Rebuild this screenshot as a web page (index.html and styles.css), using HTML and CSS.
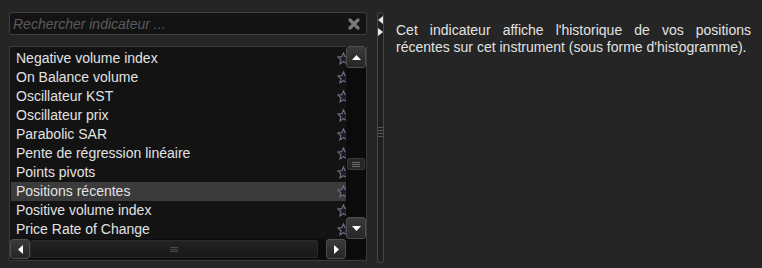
FILE: index.html
```html
<!DOCTYPE html>
<html lang="fr">
<head>
<meta charset="utf-8">
<link rel="stylesheet" href="styles.css">
</head>
<body>
<div class="page">
  <div class="left">
    <div class="search">
      <span class="placeholder">Rechercher indicateur ...</span>
      <svg class="clear" width="12" height="12" viewBox="0 0 12 12"><path d="M2 2 L10 10 M10 2 L2 10" stroke="#7a7a7a" stroke-width="3.2" stroke-linecap="round"/></svg>
    </div>
    <div class="listbox">
      <div class="items">
        <div class="row"><span>Negative volume index</span><svg class="star" viewBox="0 0 12 12"><path d="M6 0.8 L7.5 4.3 L11.3 4.6 L8.4 7.1 L9.3 10.9 L6 8.9 L2.7 10.9 L3.6 7.1 L0.7 4.6 L4.5 4.3 Z"/></svg></div>
        <div class="row"><span>On Balance volume</span><svg class="star" viewBox="0 0 12 12"><path d="M6 0.8 L7.5 4.3 L11.3 4.6 L8.4 7.1 L9.3 10.9 L6 8.9 L2.7 10.9 L3.6 7.1 L0.7 4.6 L4.5 4.3 Z"/></svg></div>
        <div class="row"><span>Oscillateur KST</span><svg class="star" viewBox="0 0 12 12"><path d="M6 0.8 L7.5 4.3 L11.3 4.6 L8.4 7.1 L9.3 10.9 L6 8.9 L2.7 10.9 L3.6 7.1 L0.7 4.6 L4.5 4.3 Z"/></svg></div>
        <div class="row"><span>Oscillateur prix</span><svg class="star" viewBox="0 0 12 12"><path d="M6 0.8 L7.5 4.3 L11.3 4.6 L8.4 7.1 L9.3 10.9 L6 8.9 L2.7 10.9 L3.6 7.1 L0.7 4.6 L4.5 4.3 Z"/></svg></div>
        <div class="row"><span>Parabolic SAR</span><svg class="star" viewBox="0 0 12 12"><path d="M6 0.8 L7.5 4.3 L11.3 4.6 L8.4 7.1 L9.3 10.9 L6 8.9 L2.7 10.9 L3.6 7.1 L0.7 4.6 L4.5 4.3 Z"/></svg></div>
        <div class="row"><span>Pente de régression linéaire</span><svg class="star" viewBox="0 0 12 12"><path d="M6 0.8 L7.5 4.3 L11.3 4.6 L8.4 7.1 L9.3 10.9 L6 8.9 L2.7 10.9 L3.6 7.1 L0.7 4.6 L4.5 4.3 Z"/></svg></div>
        <div class="row"><span>Points pivots</span><svg class="star" viewBox="0 0 12 12"><path d="M6 0.8 L7.5 4.3 L11.3 4.6 L8.4 7.1 L9.3 10.9 L6 8.9 L2.7 10.9 L3.6 7.1 L0.7 4.6 L4.5 4.3 Z"/></svg></div>
        <div class="row selected"><span>Positions récentes</span><svg class="star" viewBox="0 0 12 12"><path d="M6 0.8 L7.5 4.3 L11.3 4.6 L8.4 7.1 L9.3 10.9 L6 8.9 L2.7 10.9 L3.6 7.1 L0.7 4.6 L4.5 4.3 Z"/></svg></div>
        <div class="row"><span>Positive volume index</span><svg class="star" viewBox="0 0 12 12"><path d="M6 0.8 L7.5 4.3 L11.3 4.6 L8.4 7.1 L9.3 10.9 L6 8.9 L2.7 10.9 L3.6 7.1 L0.7 4.6 L4.5 4.3 Z"/></svg></div>
        <div class="row"><span>Price Rate of Change</span><svg class="star" viewBox="0 0 12 12"><path d="M6 0.8 L7.5 4.3 L11.3 4.6 L8.4 7.1 L9.3 10.9 L6 8.9 L2.7 10.9 L3.6 7.1 L0.7 4.6 L4.5 4.3 Z"/></svg></div>
      </div>
      <div class="vscroll">
        <div class="btn"><svg width="9" height="5" viewBox="0 0 9 5"><path d="M0 5 L4.5 0 L9 5 Z" fill="#fff"/></svg></div>
        <div class="vtrack">
          <div class="vthumb"><span class="grip-h"></span></div>
        </div>
        <div class="btn"><svg width="9" height="5" viewBox="0 0 9 5"><path d="M0 0 L4.5 5 L9 0 Z" fill="#fff"/></svg></div>
      </div>
      <div class="hscroll">
        <div class="btn"><svg width="5" height="9" viewBox="0 0 5 9"><path d="M5 0 L0 4.5 L5 9 Z" fill="#fff"/></svg></div>
        <div class="htrack">
          <div class="hthumb"><span class="grip-h small"></span></div>
        </div>
        <div class="btn"><svg width="5" height="9" viewBox="0 0 5 9"><path d="M0 0 L5 4.5 L0 9 Z" fill="#fff"/></svg></div>
      </div>
      <div class="corner"></div>
    </div>
  </div>
  <div class="splitter">
    <div class="arrows">
      <svg width="5" height="8" viewBox="0 0 5 8"><path d="M5 0 L0 4 L5 8 Z" fill="#e8e8e8"/></svg>
      <svg width="5" height="8" viewBox="0 0 5 8"><path d="M0 0 L5 4 L0 8 Z" fill="#e8e8e8"/></svg>
    </div>
    <div class="sgrip"></div>
  </div>
  <div class="desc">
    <p>Cet indicateur affiche l'historique de vos positions récentes sur cet instrument (sous forme d'histogramme).</p>
  </div>
</div>
</body>
</html>
```
FILE: styles.css
```css
* { box-sizing: border-box; }
html, body {
  margin: 0;
  padding: 0;
  background: #252525;
  width: 762px;
  height: 268px;
  overflow: hidden;
  font-family: "Liberation Sans", Arial, sans-serif;
  font-size: 14px;
}
.page {
  display: flex;
  align-items: flex-start;
  padding: 12px 0 0 9px;
}
.left {
  width: 358px;
  display: flex;
  flex-direction: column;
  gap: 11px;
}
.search {
  height: 23px;
  border: 1px solid #3f3f3f;
  border-radius: 3px;
  background: #131313;
  display: flex;
  align-items: center;
  justify-content: space-between;
  padding: 0 6px 0 3px;
}
.placeholder {
  font-style: italic;
  color: #5c5c5c;
  font-size: 14px;
  line-height: 16px;
}
.clear { display: block; }

.listbox {
  height: 215px;
  border: 1px solid #3a3a3a;
  background: #131313;
  padding: 1px 0 1px 1px;
  display: grid;
  grid-template-columns: 1fr 20px;
  grid-template-rows: 1fr 20px;
}
.items {
  overflow: hidden;
  padding-top: 1px;
}
.row {
  height: 19px;
  display: flex;
  align-items: center;
  justify-content: space-between;
  padding-left: 5px;
  color: #e2e2e2;
  font-size: 14px;
  line-height: 19px;
  white-space: nowrap;
}
.row.selected { background: #3b3b3b; }
.star {
  width: 13px;
  height: 13px;
  margin-right: -4px;
  flex: none;
  fill: #1a1a22;
  stroke: #6c6c80;
  stroke-width: 1.1;
  stroke-linejoin: miter;
}
.vscroll {
  display: flex;
  flex-direction: column;
  background: #0b0b0b;
  margin-top: -2px;
}
.btn {
  flex: none;
  display: flex;
  align-items: center;
  justify-content: center;
  background: linear-gradient(#3a3a3a, #262626);
  border: 1px solid #4e4e4e;
  border-radius: 3px;
}
.vscroll .btn { height: 22px; }
.vtrack {
  flex: 1;
  display: flex;
  flex-direction: column;
}
.vthumb {
  height: 12px;
  margin: 90px 1px 0 1px;
  background: #262626;
  border: 1px solid #3a3a3a;
  border-radius: 2px;
  display: flex;
  align-items: center;
  justify-content: center;
}
.grip-h {
  width: 8px;
  height: 5px;
  border-top: 1px solid #6a6a6a;
  border-bottom: 1px solid #6a6a6a;
  position: relative;
}
.grip-h::after {
  content: "";
  position: absolute;
  left: 0; right: 0; top: 1px;
  border-top: 1px solid #6a6a6a;
}
.grip-h.small { border-color: #4a4a4a; }
.grip-h.small::after { border-color: #4a4a4a; }
.hscroll {
  display: flex;
  background: #0b0b0b;
  margin-left: -1px;
}
.hscroll .btn { width: 20px; }
.htrack {
  flex: 1;
  display: flex;
  padding-right: 8px;
}
.hthumb {
  flex: 1;
  margin: 1px 0;
  background: linear-gradient(#232323, #181818);
  border: 1px solid #2a2a2a;
  border-radius: 2px;
  display: flex;
  align-items: center;
  justify-content: center;
}
.corner { background: #0b0b0b; }

.splitter {
  margin-left: 10px;
  width: 7px;
  height: 251px;
  border: 1px solid #474747;
  border-radius: 3px;
  background: #1f1f1f;
  display: flex;
  flex-direction: column;
  align-items: center;
}
.arrows {
  display: flex;
  flex-direction: column;
  gap: 4px;
  margin-top: 3px;
}
.arrows svg { display: block; }
.sgrip {
  margin-top: 91px;
  width: 5px;
  height: 12px;
  background: repeating-linear-gradient(#5a5a5a 0 1px, transparent 1px 3px);
}
.desc {
  width: 355px;
  margin-left: 12px;
  padding-top: 10px;
}
.desc p {
  margin: 0;
  color: #e2e2e2;
  font-size: 14px;
  line-height: 17px;
  text-align: justify;
}
```
